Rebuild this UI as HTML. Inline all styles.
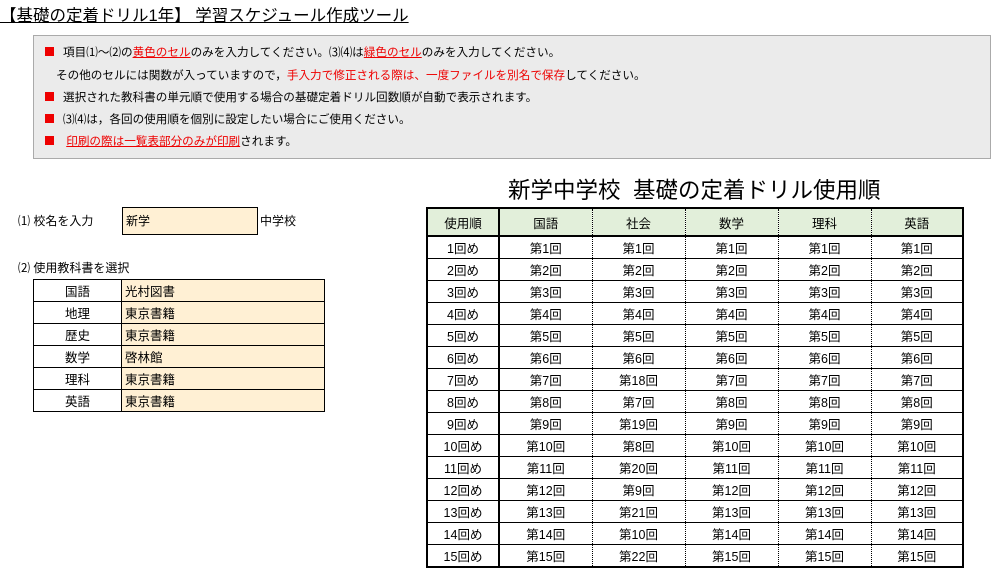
<!DOCTYPE html><html><head><meta charset="utf-8"><style>
body{margin:0;width:999px;height:557px;overflow:hidden;background:#fff;font-family:"Liberation Sans","Noto Sans CJK JP",sans-serif;color:#000;position:relative}
.a{position:absolute;white-space:nowrap}
.t{left:0;top:4px;font-size:16.5px;text-decoration:underline;line-height:24px}
.box{left:33px;top:35px;width:956px;height:122px;background:#ebebeb;border:1px solid #aaa}
.l{font-size:12px;line-height:14px}
.bx{font-size:11.6px}
.sq{display:inline-block;width:9px;height:9px;background:#e00;margin-right:9px;vertical-align:0}
.r{color:#e00}.u{text-decoration:underline}
table{border-collapse:collapse;table-layout:fixed;position:absolute}
td{padding:0;font-size:12.5px;text-align:center;overflow:hidden;white-space:nowrap}
#m{left:426px;top:207px;border:2px solid #000}
#m td{height:21px;border-top:1px solid #000;border-left:1px dotted #000}
#m tr.h td{height:26px;background:#e2efda;border-bottom:2px solid #000}
#m td.f{border-right:2px solid #000}
#s{left:33px;top:279px;border:1px solid #000}
#s td{height:21px;border:1px solid #000}
#s td.y{background:#fff0d4;text-align:left;padding-left:3px}
</style></head><body>
<div class="a t">【基礎の定着ドリル1年】 学習スケジュール作成ツール</div>
<div class="a box"></div>
<div class="a l bx" style="left:45px;top:46px"><span class="sq"></span>項目⑴～⑵の<span class="r u">黄色のセル</span>のみを入力してください。⑶⑷は<span class="r u">緑色のセル</span>のみを入力してください。</div>
<div class="a l bx" style="left:56px;top:69px">その他のセルには関数が入っていますので，<span class="r">手入力で修正される際は、一度ファイルを別名で保存</span>してください。</div>
<div class="a l bx" style="left:45px;top:91px"><span class="sq"></span>選択された教科書の単元順で使用する場合の基礎定着ドリル回数順が自動で表示されます。</div>
<div class="a l bx" style="left:45px;top:113px"><span class="sq"></span>⑶⑷は，各回の使用順を個別に設定したい場合にご使用ください。</div>
<div class="a l bx" style="left:45px;top:135px"><span class="sq"></span> <span class="r u">印刷の際は一覧表部分のみが印刷</span>されます。</div>
<div class="a" style="left:508px;top:176px;font-size:22.5px;line-height:30px">新学中学校&nbsp; 基礎の定着ドリル使用順</div>
<div class="a l" style="left:18px;top:214px">⑴ 校名を入力</div>
<div class="a l" style="left:122px;top:207px;width:131px;height:26px;border:1px solid #000;background:#fff0d4;padding-left:3px;line-height:26px">新学</div>
<div class="a l" style="left:260px;top:214px">中学校</div>
<div class="a l" style="left:18px;top:261px">⑵ 使用教科書を選択</div>
<table id="s"><colgroup><col style="width:88px"><col style="width:203px"></colgroup>
<tr><td>国語</td><td class="y">光村図書</td></tr>
<tr><td>地理</td><td class="y">東京書籍</td></tr>
<tr><td>歴史</td><td class="y">東京書籍</td></tr>
<tr><td>数学</td><td class="y">啓林館</td></tr>
<tr><td>理科</td><td class="y">東京書籍</td></tr>
<tr><td>英語</td><td class="y">東京書籍</td></tr>
</table>
<table id="m"><colgroup><col style="width:72px"><col style="width:93px"><col style="width:93px"><col style="width:93px"><col style="width:93px"><col style="width:92px"></colgroup>
<tr class="h"><td class="f">使用順</td><td>国語</td><td>社会</td><td>数学</td><td>理科</td><td>英語</td></tr>
<tr><td class="f">1回め</td><td>第1回</td><td>第1回</td><td>第1回</td><td>第1回</td><td>第1回</td></tr>
<tr><td class="f">2回め</td><td>第2回</td><td>第2回</td><td>第2回</td><td>第2回</td><td>第2回</td></tr>
<tr><td class="f">3回め</td><td>第3回</td><td>第3回</td><td>第3回</td><td>第3回</td><td>第3回</td></tr>
<tr><td class="f">4回め</td><td>第4回</td><td>第4回</td><td>第4回</td><td>第4回</td><td>第4回</td></tr>
<tr><td class="f">5回め</td><td>第5回</td><td>第5回</td><td>第5回</td><td>第5回</td><td>第5回</td></tr>
<tr><td class="f">6回め</td><td>第6回</td><td>第6回</td><td>第6回</td><td>第6回</td><td>第6回</td></tr>
<tr><td class="f">7回め</td><td>第7回</td><td>第18回</td><td>第7回</td><td>第7回</td><td>第7回</td></tr>
<tr><td class="f">8回め</td><td>第8回</td><td>第7回</td><td>第8回</td><td>第8回</td><td>第8回</td></tr>
<tr><td class="f">9回め</td><td>第9回</td><td>第19回</td><td>第9回</td><td>第9回</td><td>第9回</td></tr>
<tr><td class="f">10回め</td><td>第10回</td><td>第8回</td><td>第10回</td><td>第10回</td><td>第10回</td></tr>
<tr><td class="f">11回め</td><td>第11回</td><td>第20回</td><td>第11回</td><td>第11回</td><td>第11回</td></tr>
<tr><td class="f">12回め</td><td>第12回</td><td>第9回</td><td>第12回</td><td>第12回</td><td>第12回</td></tr>
<tr><td class="f">13回め</td><td>第13回</td><td>第21回</td><td>第13回</td><td>第13回</td><td>第13回</td></tr>
<tr><td class="f">14回め</td><td>第14回</td><td>第10回</td><td>第14回</td><td>第14回</td><td>第14回</td></tr>
<tr><td class="f">15回め</td><td>第15回</td><td>第22回</td><td>第15回</td><td>第15回</td><td>第15回</td></tr>
</table>
</body></html>
